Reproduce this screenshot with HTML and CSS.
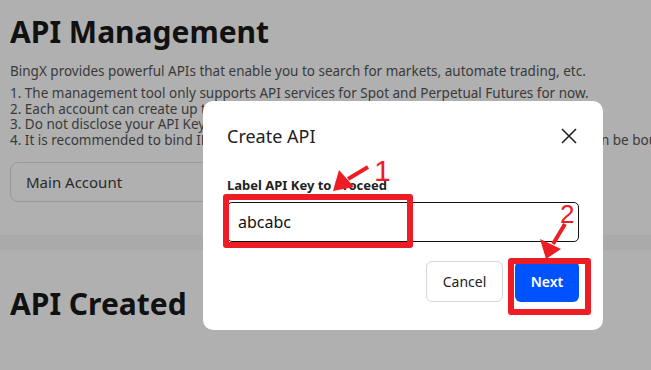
FILE: index.html
```html
<!DOCTYPE html>
<html>
<head>
<meta charset="utf-8">
<link rel="stylesheet" href="styles.css">
</head>
<body>
<div class="page">
  <section class="top">
    <h1 class="title">API Management</h1>
    <p class="desc">BingX provides powerful APIs that enable you to search for markets, automate trading, etc.</p>
    <ol class="rules">
      <li>1. The management tool only supports API services for Spot and Perpetual Futures for now.</li>
      <li>2. Each account can create up to 20 API Keys.</li>
      <li>3. Do not disclose your API Key to anyone to avoid asset loss.</li>
      <li>4. It is recommended to bind IP addresses to your API Keys. Up to 200 IP addresses in total can be bound.</li>
    </ol>
    <div class="account">Main Account</div>
  </section>
  <div class="band"></div>
  <section class="created">
    <h2 class="title">API Created</h2>
  </section>
</div>

<div class="modal">
  <div class="modal-head">
    <span class="modal-title">Create API</span>
    <svg class="close" width="18" height="18" viewBox="0 0 18 18"><path d="M2 2L16 16M16 2L2 16" stroke="#222" stroke-width="1.6" fill="none"/></svg>
  </div>
  <label class="field-label">Label API Key to Proceed</label>
  <div class="input">abcabc</div>
  <div class="actions">
    <button class="btn cancel">Cancel</button>
    <button class="btn next">Next</button>
  </div>
</div>

<div class="mark mark-input"></div>
<div class="mark mark-next"></div>
<span class="num num1">1</span>
<span class="num num2">2</span>
<svg class="arrows" width="651" height="370" viewBox="0 0 651 370">
  <path d="M368 167 L348 179" stroke="#ee1c25" stroke-width="4" fill="none"/>
  <path d="M333 191 L339 170 L354 187 Z" fill="#ee1c25"/>
  <path d="M565 224 L553 244" stroke="#ee1c25" stroke-width="4" fill="none"/>
  <path d="M546 259 L540 239 L561 249 Z" fill="#ee1c25"/>
</svg>
</body>
</html>
```
FILE: styles.css
```css
html, body {
  margin: 0;
  padding: 0;
}
body {
  width: 651px;
  height: 370px;
  overflow: hidden;
  background: #b0b0b0;
  font-family: "Noto Sans", "Open Sans", sans-serif;
  position: relative;
}
.page {
  display: flex;
  flex-direction: column;
}
.top {
  padding: 13px 0 0 10px;
  height: 222px;
  box-sizing: border-box;
}
.title {
  margin: 0;
  font-size: 30px;
  line-height: 38px;
  font-weight: 700;
  color: #111;
  letter-spacing: 0;
}
.desc {
  margin: 11px 0 0;
  font-size: 13.5px;
  line-height: 18px;
  color: #3a3a3a;
  white-space: nowrap;
}
.rules {
  list-style: none;
  margin: 6px 0 0;
  padding: 0;
  font-size: 13.5px;
  line-height: 15.5px;
  color: #3a3a3a;
  white-space: nowrap;
}
.account {
  margin-top: 14px;
  width: 320px;
  height: 40px;
  box-sizing: border-box;
  border: 1px solid #999;
  border-radius: 8px;
  padding-left: 15px;
  display: flex;
  align-items: center;
  font-size: 15px;
  color: #2a2a2a;
}
.band {
  margin-top: 13px;
  height: 15px;
  background: #aaaaaa;
}
.created {
  padding: 35px 0 0 10px;
}

.modal {
  position: absolute;
  left: 203px;
  top: 101px;
  width: 400px;
  height: 229px;
  box-sizing: border-box;
  background: #fff;
  border-radius: 10px;
  padding: 24px 24px 0;
  display: flex;
  flex-direction: column;
}
.modal-head {
  display: flex;
  justify-content: space-between;
  align-items: center;
  height: 22px;
}
.modal-title {
  font-size: 18px;
  color: #222;
}
.close {
  margin-right: 1px;
}
.field-label {
  margin-top: 30px;
  font-size: 13px;
  font-weight: 700;
  color: #222;
  line-height: 16px;
}
.input {
  margin-top: 9px;
  height: 40px;
  box-sizing: border-box;
  border: 1px solid #111;
  border-radius: 5px;
  padding-left: 10px;
  display: flex;
  align-items: center;
  font-size: 16px;
  color: #111;
}
.actions {
  margin-top: 19px;
  display: flex;
  justify-content: flex-end;
  gap: 12px;
}
.btn {
  height: 41px;
  border-radius: 6px;
  font-family: inherit;
  font-size: 14px;
  padding: 0;
}
.cancel {
  width: 77px;
  background: #fff;
  border: 1px solid #d6d6d6;
  color: #222;
}
.next {
  width: 64px;
  background: #0052ff;
  border: none;
  color: #fff;
  font-weight: 600;
}

.mark {
  position: absolute;
  border: 6px solid #ee1c25;
  border-radius: 3px;
  box-sizing: border-box;
}
.mark-input {
  left: 223px;
  top: 194px;
  width: 190px;
  height: 54px;
}
.mark-next {
  left: 508px;
  top: 258px;
  width: 83px;
  height: 57px;
}
.num {
  position: absolute;
  color: #ee1c25;
  font-family: "Liberation Sans", sans-serif;
  line-height: 1;
}
.num1 {
  left: 374px;
  top: 156px;
  font-size: 30px;
}
.num2 {
  left: 560px;
  top: 201px;
  font-size: 26px;
}
.arrows {
  position: absolute;
  left: 0;
  top: 0;
  pointer-events: none;
}
```
